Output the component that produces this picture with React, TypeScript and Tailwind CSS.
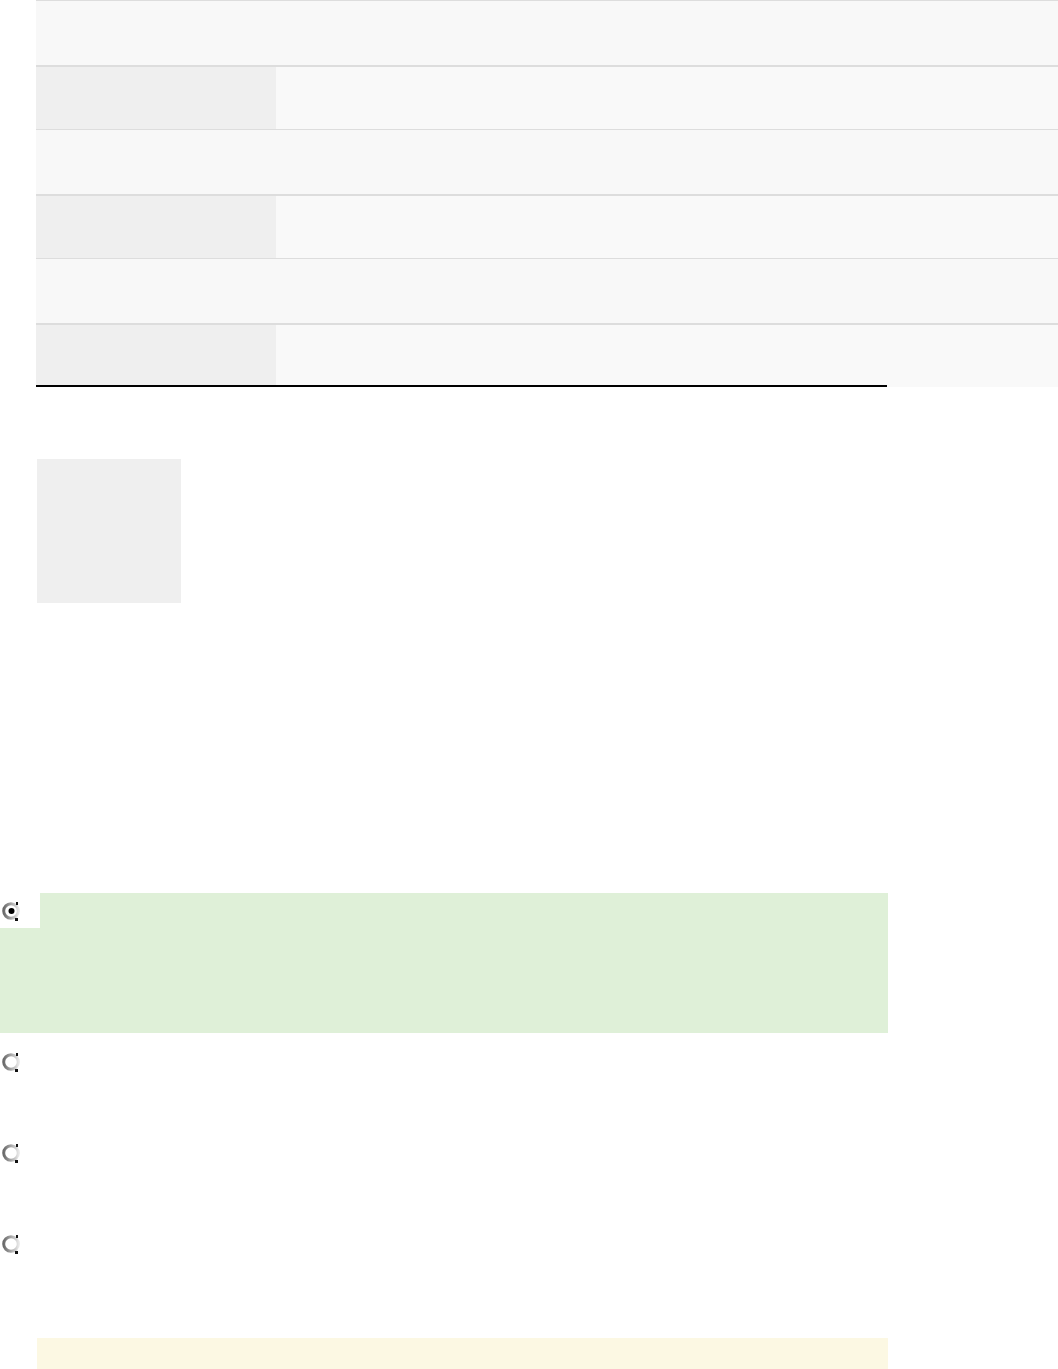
import React from "react";

function Radio({ checked }: { checked?: boolean }) {
  const id = checked ? "rg1" : "rg0";
  return (
    <svg width="20" height="22" viewBox="0 0 20 22" className="block">
      <defs>
        <linearGradient id={id} x1="0" y1="0" x2="1" y2="0">
          <stop offset="0" stopColor="#6a6a6a" />
          <stop offset="0.45" stopColor="#a0a0a0" />
          <stop offset="1" stopColor="#e6e6e6" />
        </linearGradient>
      </defs>
      <circle cx="10" cy="11" r="7.3" fill="#ffffff" stroke={`url(#${id})`} strokeWidth="3" />
      <rect x="15" y="2" width="2" height="3" fill="#111" />
      <rect x="14" y="18" width="3" height="3" fill="#111" />
      {checked && <circle cx="10.5" cy="11" r="3" fill="#000" />}
    </svg>
  );
}

export default function App() {
  return (
    <div className="w-[1058px] h-[1369px] overflow-hidden bg-white font-['Liberation_Sans',sans-serif]">
      <div className="pl-[36px]">
        <div className="w-[851px]">
          <div className="w-[1022px]">
            <div className="h-[64.5px] border-t border-[#dddddd] bg-[#f8f8f8]" />
            <div className="flex h-[64.5px] border-t-2 border-[#dddddd]">
              <div className="w-[240px] bg-[#efefef]" />
              <div className="flex-1 bg-[#f9f9f9]" />
            </div>
            <div className="h-[64.5px] border-t border-[#dddddd] bg-[#f8f8f8]" />
            <div className="flex h-[64.5px] border-t-2 border-[#dddddd]">
              <div className="w-[240px] bg-[#efefef]" />
              <div className="flex-1 bg-[#f9f9f9]" />
            </div>
            <div className="h-[64.5px] border-t border-[#dddddd] bg-[#f8f8f8]" />
            <div className="flex h-[64.5px] border-t-2 border-[#dddddd]">
              <div className="w-[240px] bg-[#efefef]" />
              <div className="flex-1 bg-[#f9f9f9]" />
            </div>
          </div>
          <div className="relative -mt-[2px] h-[2px] w-[851px] bg-black" />
        </div>
        <div className="ml-px mt-[72px] h-[144px] w-[144px] bg-[#efefef]" />
      </div>

      <div className="mt-[290px] w-[888px]">
        <div className="h-[140px] bg-[#dff0d8]">
          <div className="h-[35px] w-[40px] bg-white pl-[1px] pt-[7px]">
            <Radio checked />
          </div>
        </div>
        <div className="h-[91px] pl-[1px] pt-[18px]">
          <Radio />
        </div>
        <div className="h-[91px] pl-[1px] pt-[18px]">
          <Radio />
        </div>
        <div className="h-[91px] pl-[1px] pt-[18px]">
          <Radio />
        </div>
      </div>

      <div className="ml-[37px] mt-[32px] h-[31px] w-[851px] bg-[#fcf8e3]" />
    </div>
  );
}
